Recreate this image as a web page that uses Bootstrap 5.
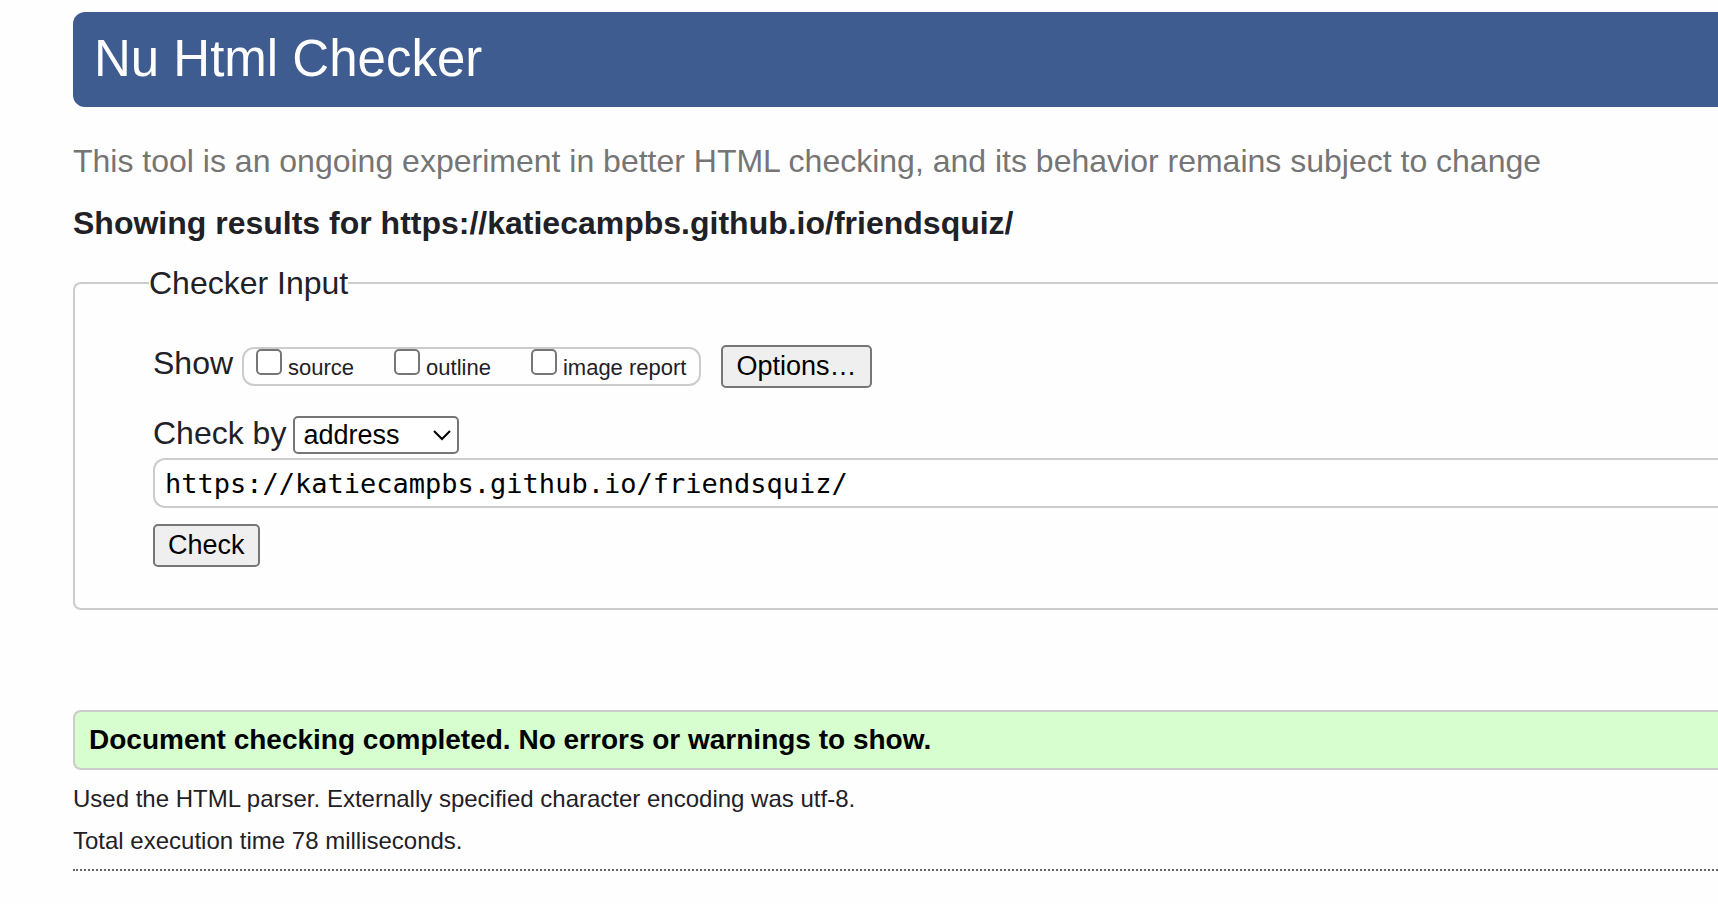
<!DOCTYPE html>
<html lang="en">
<head>
<meta charset="utf-8">
<meta name="viewport" content="width=device-width, initial-scale=1">
<title>Nu Html Checker</title>
<link rel="stylesheet" href="https://cdn.jsdelivr.net/npm/bootstrap@5.3.0/dist/css/bootstrap.min.css">
<style>
  body { font-family: "Liberation Sans", Arial, sans-serif; font-size: 32px; line-height: 36px; color: #1f2126; background: #fefefe; padding: 12px 0 0 73px; }
  .banner { background: #3f5c91; color: #fdfdfe; border-radius: 12px 0 0 12px; padding: 17px 21px 18px; }
  .banner h1 { font-size: 51px; line-height: 60px; font-weight: 400; }
  .tagline { color: #757575; margin-top: 36px; }
  .results-for { font-size: 32px; line-height: 36px; font-weight: 700; margin-top: 26px; }
  .checker { border: 2px solid #ccc; border-right: 0; border-radius: 8px 0 0 8px; padding: 44px 0 41px 74px; margin-top: 24px; }
  .checker legend { float: none; width: auto; font-size: 32px; line-height: 36px; margin: 0; }
  .checker-body { padding-left: 4px; }
  .show-set { border: 2px solid #ccc; border-radius: 12px; height: 39px; padding: 0 13px 0 12px; gap: 40px; margin: 2px 20px 0 9px; }
  .show-set label { font-size: 22px; line-height: 37px; gap: 6px; }
  .show-set input { appearance: none; width: 26px; height: 26px; border: 2px solid #767676; border-radius: 5px; background: #fff; }
  .show-set input:checked { background: #3f5c91; }
  .push { font-size: 27px; line-height: 31px; color: #000; background: #efefef; border: 2px solid #767676; border-radius: 5px; padding: 4px 13px; }
  .method-row { margin-top: 28px; }
  .method-row label { line-height: 34px; margin-right: 7px; }
  .method { appearance: none; font-size: 27px; line-height: 32px; height: 38px; width: 166px; color: #000; border: 2px solid #767676; border-radius: 5px; padding: 0 8px; background: #fff; }
  .method-wrap svg { right: 7px; top: 13px; pointer-events: none; }
  .address { font-family: "DejaVu Sans Mono", monospace; font-size: 27px; line-height: 36px; height: 50px; color: #000; background: #fff; border: 2px solid #ccc; border-right: 0; border-radius: 12px 0 0 12px; padding: 5px 10px; margin: 4px 0 16px; outline-offset: -2px; }
  .success-note { font-size: 28px; line-height: 32px; font-weight: 700; color: #000; background: #d6fecf; border: 2px solid #ccc; border-right: 0; border-radius: 8px 0 0 8px; padding: 12px 14px; margin: 100px 0 15px; }
  .details { font-size: 24px; line-height: 28px; }
  .details p { margin: 0 0 14px; }
  .end-rule { border-top: 2px dotted #666; }
</style>
</head>
<body>
<header class="banner"><h1 class="m-0">Nu Html Checker</h1></header>
<main>
  <p class="tagline mb-0">This tool is an ongoing experiment in better HTML checking, and its behavior remains subject to change</p>
  <h2 class="results-for mb-0">Showing results for https://katiecampbs.github.io/friendsquiz/</h2>
  <form>
    <fieldset class="checker">
      <legend>Checker Input</legend>
      <div class="checker-body">
        <div class="d-flex align-items-start">
          <span>Show</span>
          <div class="show-set d-flex" role="group" aria-label="Show">
            <label class="d-flex" for="show-source"><input type="checkbox" id="show-source">source</label>
            <label class="d-flex" for="show-outline"><input type="checkbox" id="show-outline">outline</label>
            <label class="d-flex" for="show-images"><input type="checkbox" id="show-images">image report</label>
          </div>
          <button type="button" class="push">Options…</button>
        </div>
        <div class="method-row d-flex">
          <label for="method">Check by</label>
          <div class="method-wrap position-relative d-flex">
            <select class="method" id="method"><option>address</option><option>file upload</option><option>text input</option></select>
            <svg class="position-absolute" width="20" height="14" viewBox="0 0 20 14" fill="none" stroke="#000" stroke-width="2" aria-hidden="true"><path d="M2 2 10 10 18 2"/></svg>
          </div>
        </div>
        <input class="address d-block w-100" type="url" aria-label="Address" value="https://katiecampbs.github.io/friendsquiz/">
        <button type="submit" class="push d-block">Check</button>
      </div>
    </fieldset>
  </form>
  <p class="success-note">Document checking completed. No errors or warnings to show.</p>
  <div class="details">
    <p>Used the HTML parser. Externally specified character encoding was utf-8.</p>
    <p>Total execution time 78 milliseconds.</p>
  </div>
  <div class="end-rule"></div>
</main>
<script src="https://cdn.jsdelivr.net/npm/bootstrap@5.3.0/dist/js/bootstrap.bundle.min.js"></script>
</body>
</html>
